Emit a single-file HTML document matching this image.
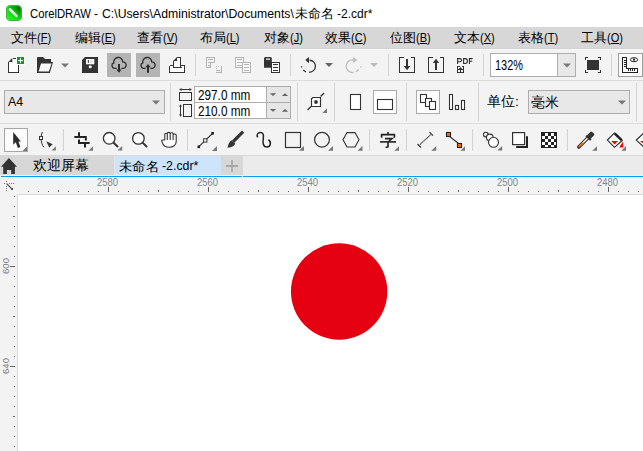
<!DOCTYPE html>
<html><head><meta charset="utf-8">
<style>
*{margin:0;padding:0;box-sizing:border-box}
html,body{width:643px;height:451px;overflow:hidden;background:#fff;font-family:"Liberation Sans",sans-serif;color:#000}
.a{position:absolute}
#ov{position:absolute;left:0;top:0;width:643px;height:451px}
.mi{position:absolute;top:29.6px;font-size:13px;line-height:16px;white-space:nowrap;color:#000}
.mi span{font-size:12px;display:inline-block;transform-origin:0 50%;transform:scaleX(0.92)}
.rl{position:absolute;top:177px;font-size:10px;line-height:12px;color:#858585;white-space:nowrap;transform-origin:0 0;transform:scaleX(0.95)}
.vl{position:absolute;left:1px;font-size:9.6px;line-height:9.6px;color:#808080;white-space:nowrap;transform-origin:0 0;transform:rotate(-90deg)}
</style></head><body>
<svg id="ov" width="643" height="451" viewBox="0 0 643 451">
<defs>
<linearGradient id="lg" x1="0" y1="1" x2="1" y2="0">
<stop offset="0" stop-color="#22ff22"/><stop offset="0.5" stop-color="#12d012"/><stop offset="1" stop-color="#004800"/>
</linearGradient>
<linearGradient id="sg" x1="0" y1="0" x2="1" y2="1">
<stop offset="0" stop-color="#ffffff"/><stop offset="1" stop-color="#c8d8c8"/>
</linearGradient>
</defs>
<!-- bands -->
<rect x="0" y="0" width="643" height="27" fill="#fff"/>
<rect x="0" y="27" width="643" height="22" fill="#d7d7d7"/>
<rect x="0" y="48" width="643" height="1" fill="#d2d2d2"/>
<rect x="0" y="49" width="643" height="1" fill="#f6f6f6"/>
<rect x="0" y="50" width="643" height="105" fill="#f3f3f3"/>
<rect x="0" y="80" width="643" height="1" fill="#dcdcdc"/>
<rect x="0" y="123" width="643" height="1" fill="#dcdcdc"/>
<rect x="0" y="155" width="643" height="1" fill="#d9d9d9"/>
<rect x="0" y="156" width="643" height="19" fill="#ebebeb"/>
<rect x="0" y="156" width="114" height="19" fill="#d7d7d7"/>
<rect x="114" y="156" width="1" height="19" fill="#e6e6e6"/>
<rect x="115" y="156" width="106" height="19" fill="#cde4fb"/>
<rect x="221" y="156" width="22" height="19" fill="#d7d7d7"/>
<rect x="0" y="175" width="643" height="1" fill="#efefef"/>
<rect x="1" y="176" width="241" height="1" fill="#00a0ee"/>
<rect x="243" y="176" width="400" height="1" fill="#00a0ee"/>
<rect x="0" y="177" width="643" height="274" fill="#f3f3f3"/>
<rect x="17" y="194" width="626" height="257" fill="#dadada"/>
<rect x="18" y="195" width="625" height="256" fill="#fff"/>

<!-- logo -->
<rect x="6" y="5" width="16" height="16" rx="4.6" fill="#3f8f3f"/>
<rect x="6.6" y="5.6" width="14.8" height="14.8" rx="3.6" fill="#28f028"/>
<rect x="7.3" y="6.3" width="13.4" height="13.4" rx="3.2" fill="url(#lg)"/>
<line x1="10" y1="9.4" x2="16.6" y2="16" stroke="url(#sg)" stroke-width="2.6" stroke-linecap="round"/>

<!-- ===== toolbar 1 ===== -->
<g fill="none" stroke="#333" stroke-width="1" shape-rendering="crispEdges">
 <!-- new doc -->
 <path d="M8,62 L12,58 L16,58 L16,64 L19,64 L19,73 L8,73 Z" fill="#fff" stroke="none"/>
</g>
<g fill="none" stroke="#333" stroke-width="1" shape-rendering="crispEdges">
 <path d="M12.5,58.5 H15.5 M8.5,62 V72.5 H18.5 V65" />
</g>
<path d="M8.3,62 L12.3,58 L12.3,62 Z" fill="#333"/>
<rect x="16" y="56" width="9" height="9" fill="#fff"/>
<rect x="17" y="57" width="7" height="7" fill="#109a2e"/>
<rect x="18" y="60" width="5" height="1" fill="#fff"/>
<rect x="20" y="58" width="1" height="5" fill="#fff"/>

<!-- open folder -->
<path d="M37,58 Q37,57 38,57 L43,57 L45,59 L51,59 L51,62 L53,62 L49.8,73 L37,73 Z" fill="#333"/>
<path d="M41,63.6 L51.6,63.6 L48.9,71.6 L38.6,71.6 Z" fill="#f7f7f7"/>
<path d="M61,63.5 L69,63.5 L65,67.5 Z" fill="#777"/>

<!-- save -->
<path d="M85,57 L98,57 L98,73 L82,73 L82,60 Z" fill="#333"/>
<rect x="86" y="59" width="8.3" height="5.3" fill="#fff"/>
<rect x="87.8" y="60" width="1.1" height="2.8" fill="#333"/>
<rect x="90" y="60" width="3" height="3" fill="#e6e6e6"/>
<circle cx="90.2" cy="66.8" r="1.5" fill="#fff"/>

<!-- cloud download -->
<rect x="107" y="53" width="24" height="24" fill="#b4b4b4"/>
<path d="M116.6,68.3 H114.3 A2.8,2.8 0 0 1 113.8,62.9 A4.5,4.5 0 1 1 122.7,61.9 A3.2,3.2 0 1 1 123.2,68.3 H121.4" fill="none" stroke="#2a2a2a" stroke-width="1.3"/>
<path d="M119,64 V70" stroke="#2a2a2a" stroke-width="2"/>
<path d="M116.3,69.6 L121.7,69.6 L119,72.8 Z" fill="#2a2a2a"/>
<!-- cloud upload -->
<rect x="136" y="53" width="24" height="24" fill="#b4b4b4"/>
<path d="M145.6,68.3 H143.3 A2.8,2.8 0 0 1 142.8,62.9 A4.5,4.5 0 1 1 151.7,61.9 A3.2,3.2 0 1 1 152.2,68.3 H150.4" fill="none" stroke="#2a2a2a" stroke-width="1.3"/>
<path d="M148,66 V72.8" stroke="#2a2a2a" stroke-width="2"/>
<path d="M145.3,67.2 L150.7,67.2 L148,64 Z" fill="#2a2a2a"/>

<!-- print -->
<path d="M173,60 L176,57 L181,57 L181,67 L173,67 Z" fill="#fff"/>
<rect x="169" y="65" width="16" height="8" fill="#fff"/>
<g fill="none" stroke="#333" stroke-width="1" shape-rendering="crispEdges">
 <path d="M176.5,57.5 H180.5 V67.5 M173.5,60.5 V67.5"/>
 <path d="M169.5,65.5 V72.5 H184.5 V65.5 H180.5 M169.5,65.5 H173.5 M172.5,67.5 H181.5"/>
</g>
<path d="M173,61 L177,57 L177,61 Z" fill="#333"/>

<!-- separators -->
<g fill="#d2d2d2">
<rect x="195" y="54" width="1" height="22"/>
<rect x="290" y="54" width="1" height="22"/>
<rect x="388" y="54" width="1" height="22"/>
<rect x="483" y="54" width="1" height="22"/>
<rect x="611" y="54" width="1" height="22"/>
</g>

<!-- disabled icon 1 -->
<g fill="none" stroke="#b4b4b4" stroke-width="1" shape-rendering="crispEdges">
 <path d="M206.5,57.5 H214.5 V62.5 H210.5 V67.5 H206.5 Z"/>
 <path d="M208,59.5 H213 M208,62.5 H210 M208,65.5 H210"/>
 <path d="M221.5,66 V72.5 H216 M216,70.5 H220"/>
 <path d="M216,66.5 H217 M218,66.5 H219 M216,68.5 H217"/>
</g>
<!-- disabled icon 2 -->
<g fill="none" stroke="#b4b4b4" stroke-width="1" shape-rendering="crispEdges">
 <rect x="235.5" y="57.5" width="8" height="10" fill="#f8f8f8"/>
 <path d="M237,59.5 H242 M237,62.5 H242 M237,65.5 H242"/>
 <rect x="242.5" y="62.5" width="8" height="10" fill="#f8f8f8"/>
 <path d="M244,64.5 H249 M244,67.5 H249 M244,70.5 H249"/>
</g>
<!-- icon 3 -->
<path d="M264,67.8 V58.5 Q264,57 265.5,57 H270.3 Q271.8,57 271.8,58.5 V67.8 Z" fill="#333"/>
<rect x="266" y="58.5" width="4" height="1.2" fill="#fff"/>
<g fill="none" stroke="#333" stroke-width="1" shape-rendering="crispEdges">
 <rect x="271.5" y="62.5" width="8" height="10" fill="#fff"/>
 <path d="M273,64.5 H278 M273,67.5 H278 M273,70.5 H278"/>
</g>

<!-- undo -->
<path d="M309.6,60.25 A6,6 0 1 1 309.2,72.25" fill="none" stroke="#333" stroke-width="1.3"/>
<path d="M303.2,69.9 L306,72" stroke="#333" stroke-width="1.3"/>
<path d="M301.3,66.3 L302,67.4" stroke="#333" stroke-width="1.3"/>
<path d="M305.3,60.1 L309,57 L309,63.2 Z" fill="#333"/>
<path d="M325,63 L333,63 L329,67 Z" fill="#666"/>
<!-- redo -->
<path d="M353.2,59.95 A6.3,6.3 0 1 0 353.6,72.4" fill="none" stroke="#bbb" stroke-width="1.3"/>
<path d="M358.8,69.5 L355.9,71.8" stroke="#bbb" stroke-width="1.3"/>
<path d="M361.2,66.2 L360.5,67.5" stroke="#bbb" stroke-width="1.3"/>
<path d="M357.2,60 L353.2,56.9 L353.2,63.1 Z" fill="#bbb"/>
<path d="M370,63 L378,63 L374,67 Z" fill="#bbb"/>

<!-- import -->
<g fill="none" stroke="#333" stroke-width="1" shape-rendering="crispEdges">
 <path d="M403.5,57.5 H399.5 V72.5 H414.5 V57.5 H410.5"/>
 <path d="M432.5,57.5 H428.5 V72.5 H443.5 V57.5 H439.5"/>
</g>
<rect x="406" y="59" width="2" height="8" fill="#333"/>
<path d="M403.8,66 L410.2,66 L407,70.2 Z" fill="#333"/>
<!-- export -->
<rect x="435" y="62" width="2" height="8" fill="#333"/>
<path d="M432.8,63 L439.2,63 L436,58.8 Z" fill="#333"/>
<!-- pdf -->
<path d="M457.6,64 V58.6 H459.8 Q461.5,58.6 461.5,60.2 Q461.5,61.8 459.8,61.8 H457.6 M463.6,58.6 V63.5 H465.2 Q467.4,63.5 467.4,61.05 Q467.4,58.6 465.2,58.6 Z M469.4,64 V58.6 H472.6 M469.4,61.2 H472.2" fill="none" stroke="#2a2a2a" stroke-width="1.05"/>
<g fill="none" stroke="#333" stroke-width="1" shape-rendering="crispEdges">
 <path d="M459.5,66.5 H457.5 V72.5 H463.5 V66.5 H461.5 M457.5,69.5 H463.5 M460.5,68 V72"/>
</g>
<path d="M458.5,69.3 L462.5,69.3 L460.5,67 Z" fill="#333"/>

<!-- zoom combo -->
<rect x="490.5" y="53.5" width="85" height="23" fill="#fff" stroke="#adadad"/>
<rect x="558" y="54" width="17" height="22" fill="#e8e8e8"/>
<rect x="557" y="54" width="1" height="22" fill="#adadad"/>
<path d="M563,63.5 L571,63.5 L567,67.5 Z" fill="#777"/>

<!-- fullscreen -->
<rect x="587" y="60" width="12" height="10" fill="#333"/>
<g fill="none" stroke="#333" stroke-width="1" shape-rendering="crispEdges">
 <path d="M585.5,60 V57.5 H588 M598,57.5 H600.5 V60 M600.5,70 V72.5 H598 M588,72.5 H585.5 V70"/>
</g>

<!-- ruler button -->
<rect x="618.5" y="53.5" width="24" height="23" fill="#fafafa" stroke="#9e9e9e"/>
<g fill="none" stroke="#222" stroke-width="1" shape-rendering="crispEdges">
 <path d="M622.5,57.5 H626.5 V68.5 H637.5 V72.5 H622.5 Z"/>
 <path d="M624,60.5 H626 M624,62.5 H626 M624,64.5 H626 M624,66.5 H626"/>
 <path d="M628.5,69 V71 M630.5,69 V71 M632.5,69 V71 M634.5,69 V71"/>
</g>
<ellipse cx="634" cy="59.7" rx="3.7" ry="2" fill="#fff" stroke="#222" stroke-width="1"/>
<circle cx="634" cy="59.7" r="1.1" fill="#222"/>

<!-- ===== property bar ===== -->
<rect x="4.5" y="90.5" width="160" height="23" fill="#e8e8e8" stroke="#adadad"/>
<path d="M152,100.5 L160,100.5 L156,104.5 Z" fill="#777"/>
<rect x="170" y="83" width="1" height="38" fill="#d2d2d2"/>

<!-- width/height icons -->
<g fill="none" stroke="#333" stroke-width="1" shape-rendering="crispEdges">
 <rect x="179.5" y="92.5" width="12" height="8"/>
 <path d="M180,89.5 H191"/>
 <rect x="183.5" y="104.5" width="8" height="12"/>
 <path d="M180.5,105 V116"/>
</g>
<path d="M179.2,89.5 L181.5,88 V91 Z M191.8,89.5 L189.5,88 V91 Z" fill="#333"/>
<path d="M180.5,104.3 L179,106.5 H182 Z M180.5,116.7 L179,114.5 H182 Z" fill="#333"/>

<!-- w/h input -->
<rect x="194.5" y="86.5" width="96" height="32" fill="#fff" stroke="#adadad"/>
<rect x="267" y="87" width="23" height="31" fill="#e6e6e6"/>
<rect x="266" y="87" width="1" height="31" fill="#adadad"/>
<rect x="195" y="102" width="95" height="1" fill="#adadad"/>
<path d="M269.8,93.3 L276.2,93.3 L273,96 Z M281.8,96 L288.2,96 L285,93.3 Z" fill="#666"/>
<path d="M269.8,109 L276.2,109 L273,111.8 Z M281.8,111.8 L288.2,111.8 L285,109 Z" fill="#666"/>
<rect x="297" y="83" width="1" height="38" fill="#d2d2d2"/>

<!-- node icon -->
<path d="M312.8,97.5 H320.5 V106.5 H311.5 V98.8 Z" fill="#fff" stroke="#333" stroke-width="1.2"/>
<circle cx="316" cy="102" r="1.9" fill="#333"/>
<path d="M308,109.5 L310.6,106.9 M321,96 L323.6,93.4" stroke="#333" stroke-width="1.4" stroke-linecap="round"/>
<path d="M322.3,113 L327,108.3 L327,113 Z" fill="#777"/>
<rect x="334" y="83" width="1" height="38" fill="#d2d2d2"/>

<!-- portrait / landscape -->
<rect x="350.5" y="94.5" width="10" height="15" fill="#fff" stroke="#333" stroke-width="1.1"/>
<rect x="373.5" y="90.5" width="23" height="23" fill="#fff" stroke="#aaa"/>
<rect x="377.5" y="99.5" width="15" height="10" fill="#fff" stroke="#333" stroke-width="1.1"/>
<rect x="406" y="83" width="1" height="38" fill="#d2d2d2"/>

<!-- all pages / current page -->
<rect x="416.5" y="90.5" width="23" height="23" fill="#fff" stroke="#aaa"/>
<g fill="#fff" stroke="#333" stroke-width="1.1">
 <rect x="420.5" y="94.5" width="6" height="8"/>
 <rect x="425.5" y="98.5" width="6" height="8"/>
 <rect x="429.5" y="101.5" width="6" height="8"/>
</g>
<g fill="#fff" stroke="#333" stroke-width="1.1">
 <rect x="449.5" y="94.5" width="3" height="15"/>
 <rect x="455.5" y="105.5" width="3" height="4"/>
 <rect x="461.5" y="100.5" width="3" height="9"/>
</g>
<rect x="478" y="83" width="1" height="38" fill="#d2d2d2"/>

<!-- units combo -->
<rect x="528.5" y="90.5" width="101" height="23" fill="#e8e8e8" stroke="#adadad"/>
<path d="M618,100.5 L626,100.5 L622,104.5 Z" fill="#777"/>
<rect x="636" y="83" width="1" height="38" fill="#d2d2d2"/>

<!-- ===== toolbox ===== -->
<rect x="4.5" y="128.5" width="23" height="23" fill="#fcfcfc" stroke="#a6a6a6"/>
<path d="M13.2,131.9 L13.2,144.8 L15.8,142.3 L17.8,147.9 L20.4,146.9 L18.5,141.6 L20.9,141.4 Z" fill="#2b2b2b"/>
<path d="M22.5,151 L27,146.5 L27,151 Z" fill="#777"/>

<!-- shape tool -->
<path d="M42.3,132 C41.6,134 41,136 41,137.9 C41,141.5 42,145 43.8,147.3" fill="none" stroke="#333" stroke-width="1"/>
<rect x="39.5" y="136.5" width="3" height="3" fill="#fff" stroke="#333" stroke-width="1"/>
<path d="M46.2,141.2 L52.6,144.3 L49.3,147.5 Z" fill="#333"/>
<path d="M51.6,150.5 L55.9,146.3 L55.9,150.5 Z" fill="#777"/>
<rect x="63" y="129" width="1" height="22" fill="#d2d2d2"/>

<!-- crop -->
<path d="M79,132.3 V137.5 M74.3,137 H85.8 V140.4 M79,139.5 V143.6 M78,143 H89.6 M85,143 V147.6" fill="none" stroke="#222" stroke-width="2" />
<path d="M88.4,150.8 L93,146.3 L93,150.8 Z" fill="#777"/>
<!-- zoom -->
<circle cx="109.2" cy="138.3" r="5.8" fill="#fff" stroke="#333" stroke-width="1.3"/>
<path d="M113.4,142.5 L118,147" stroke="#333" stroke-width="2"/>
<path d="M117.3,150.6 L122.2,146 L122.2,150.6 Z" fill="#777"/>
<circle cx="138.4" cy="138.4" r="5.8" fill="#fff" stroke="#333" stroke-width="1.3"/>
<path d="M142.6,142.6 L147,147" stroke="#333" stroke-width="2"/>
<!-- hand -->
<path d="M164.8,140 V134.3 Q164.8,133.3 166,133.3 Q167.3,133.3 167.3,134.3 V140 M167.3,134 V133.4 Q167.3,132.4 168.7,132.4 Q170.2,132.4 170.2,133.4 V140 M170.2,133.6 Q170.2,132.7 171.6,132.7 Q173.1,132.7 173.1,133.6 V140 M173.1,135 Q173.1,134 174.6,134 Q176.2,134 176.2,135 V141.5 C176.2,145 173,147.3 169.2,147.3 C165.5,147.3 163,145 162,141.8 L161.7,140.8 Q161.7,140 162.5,140 H164.8" fill="#fff" stroke="#333" stroke-width="1.1"/>
<rect x="187" y="129" width="1" height="22" fill="#d2d2d2"/>

<!-- bezier -->
<path d="M198.5,146.8 L212.5,133.5" stroke="#333" stroke-width="1.1"/>
<rect x="197.5" y="145.5" width="2.6" height="2.6" fill="#222"/>
<rect x="211.3" y="132" width="2.6" height="2.6" fill="#222"/>
<rect x="203.6" y="138.8" width="3.3" height="3.3" fill="#fff" stroke="#333" stroke-width="1"/>
<path d="M212,151 L217,146 L217,151 Z" fill="#777"/>
<!-- brush -->
<path d="M234.3,140.5 L242,132.8" stroke="#333" stroke-width="3.2" stroke-linecap="square"/>
<path d="M227.5,147.8 C228,144.5 229.3,141.7 231.5,140.2 L235.3,143.6 C234.5,146 231.5,147.5 227.5,147.8 Z" fill="#333"/>
<!-- curl -->
<path d="M257.7,137.3 C256.2,135 257.8,132.4 260.2,132.4 C263.4,132.4 263.8,135.5 263.3,138.4 C262.6,142.5 263,147 266.8,147 C270.5,147 271.8,142.5 268.5,139.6" fill="none" stroke="#222" stroke-width="1.5"/>

<!-- rect / ellipse / polygon -->
<rect x="285.5" y="132.5" width="15" height="15" fill="none" stroke="#333" stroke-width="1.2"/>
<path d="M299,150.8 L304,146 L304,150.8 Z" fill="#777"/>
<circle cx="322" cy="139.7" r="7.4" fill="none" stroke="#333" stroke-width="1.2"/>
<path d="M328,150.8 L333,146 L333,150.8 Z" fill="#777"/>
<path d="M347,132.6 L355,132.6 L359,139.8 L355,147 L347,147 L343,139.8 Z" fill="none" stroke="#333" stroke-width="1.1"/>
<path d="M357.5,150.8 L362.5,146 L362.5,150.8 Z" fill="#777"/>
<rect x="369" y="129" width="1" height="22" fill="#d2d2d2"/>

<!-- text tool 字 -->
<g fill="none" stroke="#222" stroke-width="1.6">
 <path d="M388,132 V134.5"/>
 <path d="M381.6,137.8 V134.6 H394.4 V137.8"/>
 <path d="M385,138.6 H392 L388.6,141.5"/>
 <path d="M380,141.9 H396"/>
 <path d="M388,141.5 V146.5 Q388,147.3 387,147.3 H385.6"/>
</g>
<path d="M394.3,150.8 L399,146.3 L399,150.8 Z" fill="#777"/>
<rect x="406" y="129" width="1" height="22" fill="#d2d2d2"/>

<!-- dimension -->
<path d="M420,144.5 L431,134.5" stroke="#333" stroke-width="1.1" stroke-dasharray="1.2 0.4"/>
<path d="M429.5,132.2 L433,135.7 M417.5,144 L421,147.5" stroke="#333" stroke-width="1.2"/>
<path d="M431.3,150.8 L436.2,146 L436.2,150.8 Z" fill="#777"/>
<!-- connector -->
<path d="M449,136 L458.5,143.5" stroke="#333" stroke-width="1.1"/>
<rect x="446.5" y="132.5" width="4" height="4" fill="#ff6a00" stroke="#222" stroke-width="1.1"/>
<rect x="457.5" y="143.5" width="4" height="4" fill="#ff6a00" stroke="#222" stroke-width="1.1"/>
<path d="M460.4,150.8 L465,146.3 L465,150.8 Z" fill="#777"/>
<rect x="472" y="129" width="1" height="22" fill="#d2d2d2"/>

<!-- blend -->
<g fill="#fff" stroke="#333" stroke-width="1.1">
 <circle cx="485.8" cy="134.6" r="2.3"/>
 <circle cx="489.8" cy="137.4" r="3.3"/>
 <circle cx="493.5" cy="142.3" r="5"/>
</g>
<path d="M497.3,150.6 L502.2,146 L502.2,150.6 Z" fill="#777"/>
<!-- shadow -->
<rect x="512.6" y="132.6" width="12" height="12" fill="#fff" stroke="#333" stroke-width="1.2"/>
<path d="M527,136.2 V147 H516.2" fill="none" stroke="#222" stroke-width="2"/>
<!-- checker -->
<rect x="541" y="132" width="16" height="16" fill="#222"/>
<g fill="#fff">
 <rect x="545" y="133" width="3" height="3"/><rect x="551" y="133" width="3" height="3"/>
 <rect x="542" y="136" width="3" height="3"/><rect x="548" y="136" width="3" height="3"/><rect x="554" y="136" width="2" height="3"/>
 <rect x="545" y="139" width="3" height="3"/><rect x="551" y="139" width="3" height="3"/>
 <rect x="542" y="142" width="3" height="3"/><rect x="548" y="142" width="3" height="3"/><rect x="554" y="142" width="2" height="3"/>
 <rect x="545" y="145" width="3" height="2"/><rect x="551" y="145" width="3" height="2"/>
</g>
<rect x="567" y="129" width="1" height="22" fill="#d2d2d2"/>

<!-- eyedropper -->
<path d="M578.8,147 L588.5,137.3" stroke="#333" stroke-width="3.6" stroke-linecap="round"/>
<path d="M580.2,145.6 L588,137.8" stroke="#fff" stroke-width="1.4"/>
<path d="M579.2,146.6 L582.6,143.2" stroke="#ee6a10" stroke-width="1.8" stroke-linecap="round"/>
<path d="M586.3,135.5 L590.8,140" stroke="#333" stroke-width="2.4"/>
<rect x="588.3" y="131.8" width="5" height="6.5" rx="1.3" transform="rotate(45 590.8 135)" fill="#333"/>
<path d="M592.2,150.8 L597,146.3 L597,150.8 Z" fill="#777"/>
<!-- fill -->
<path d="M614.5,132.9 L622.3,140.4 L614.5,147.3 L607.4,140.1 Z" fill="#fff" stroke="#222" stroke-width="1.1"/>
<path d="M614.8,133.6 L621.6,140.1" stroke="#222" stroke-width="2.6"/>
<path d="M611.2,141 L618,141 L614.6,144.4 Z" fill="#ff0000"/>
<path d="M619.2,147.6 L623,141.5 L623.3,147.6 Z" fill="#ff0000"/>
<path d="M621.4,150.7 L626,146.1 L626,150.7 Z" fill="#777"/>
<path d="M644,132.9 L636.3,140.1 L644,147.3" fill="#fff" stroke="#222" stroke-width="1.1"/>
<path d="M640,141 L643,141 L643,143.5 Z" fill="#ff0000"/>

<!-- ===== tabs ===== -->
<path d="M8.9,158 L17,166.8 L14.9,166.8 L14.9,174 L11.2,174 L11.2,170 L6.9,170 L6.9,174 L3.2,174 L3.2,166.8 L1,166.8 Z" fill="#333"/>
<path d="M226,166 H238 M232,160 V172" stroke="#a8a8a8" stroke-width="1.8"/>

<!-- rulers -->
<g fill="#666" id="ticks"><rect x="28" y="191" width="1" height="1"/><rect x="38" y="191" width="1" height="1"/><rect x="48" y="191" width="1" height="1"/><rect x="58" y="190" width="1" height="2"/><rect x="68" y="191" width="1" height="1"/><rect x="78" y="191" width="1" height="1"/><rect x="88" y="191" width="1" height="1"/><rect x="98" y="191" width="1" height="1"/><rect x="108" y="187" width="1" height="5"/><rect x="118" y="191" width="1" height="1"/><rect x="128" y="191" width="1" height="1"/><rect x="138" y="191" width="1" height="1"/><rect x="148" y="191" width="1" height="1"/><rect x="158" y="190" width="1" height="2"/><rect x="168" y="191" width="1" height="1"/><rect x="178" y="191" width="1" height="1"/><rect x="188" y="191" width="1" height="1"/><rect x="198" y="191" width="1" height="1"/><rect x="208" y="187" width="1" height="5"/><rect x="218" y="191" width="1" height="1"/><rect x="228" y="191" width="1" height="1"/><rect x="238" y="191" width="1" height="1"/><rect x="248" y="191" width="1" height="1"/><rect x="258" y="190" width="1" height="2"/><rect x="268" y="191" width="1" height="1"/><rect x="278" y="191" width="1" height="1"/><rect x="288" y="191" width="1" height="1"/><rect x="298" y="191" width="1" height="1"/><rect x="308" y="187" width="1" height="5"/><rect x="318" y="191" width="1" height="1"/><rect x="328" y="191" width="1" height="1"/><rect x="338" y="191" width="1" height="1"/><rect x="348" y="191" width="1" height="1"/><rect x="358" y="190" width="1" height="2"/><rect x="368" y="191" width="1" height="1"/><rect x="378" y="191" width="1" height="1"/><rect x="388" y="191" width="1" height="1"/><rect x="398" y="191" width="1" height="1"/><rect x="408" y="187" width="1" height="5"/><rect x="418" y="191" width="1" height="1"/><rect x="428" y="191" width="1" height="1"/><rect x="438" y="191" width="1" height="1"/><rect x="448" y="191" width="1" height="1"/><rect x="458" y="190" width="1" height="2"/><rect x="468" y="191" width="1" height="1"/><rect x="478" y="191" width="1" height="1"/><rect x="488" y="191" width="1" height="1"/><rect x="498" y="191" width="1" height="1"/><rect x="508" y="187" width="1" height="5"/><rect x="518" y="191" width="1" height="1"/><rect x="528" y="191" width="1" height="1"/><rect x="538" y="191" width="1" height="1"/><rect x="548" y="191" width="1" height="1"/><rect x="558" y="190" width="1" height="2"/><rect x="568" y="191" width="1" height="1"/><rect x="578" y="191" width="1" height="1"/><rect x="588" y="191" width="1" height="1"/><rect x="598" y="191" width="1" height="1"/><rect x="608" y="187" width="1" height="5"/><rect x="618" y="191" width="1" height="1"/><rect x="628" y="191" width="1" height="1"/><rect x="638" y="191" width="1" height="1"/><rect x="14" y="196" width="1" height="1"/><rect x="14" y="206" width="1" height="1"/><rect x="13" y="216" width="2" height="1"/><rect x="14" y="226" width="1" height="1"/><rect x="14" y="236" width="1" height="1"/><rect x="14" y="246" width="1" height="1"/><rect x="14" y="256" width="1" height="1"/><rect x="10" y="266" width="5" height="1"/><rect x="14" y="276" width="1" height="1"/><rect x="14" y="286" width="1" height="1"/><rect x="14" y="296" width="1" height="1"/><rect x="14" y="306" width="1" height="1"/><rect x="13" y="316" width="2" height="1"/><rect x="14" y="326" width="1" height="1"/><rect x="14" y="336" width="1" height="1"/><rect x="14" y="346" width="1" height="1"/><rect x="14" y="356" width="1" height="1"/><rect x="10" y="366" width="5" height="1"/><rect x="14" y="376" width="1" height="1"/><rect x="14" y="386" width="1" height="1"/><rect x="14" y="396" width="1" height="1"/><rect x="14" y="406" width="1" height="1"/><rect x="13" y="416" width="2" height="1"/><rect x="14" y="426" width="1" height="1"/><rect x="14" y="436" width="1" height="1"/><rect x="14" y="446" width="1" height="1"/></g>

<!-- corner icon -->
<g fill="#777">
 <rect x="6" y="181" width="1" height="1"/><rect x="6" y="186" width="1" height="1"/><rect x="6" y="188" width="1" height="1"/><rect x="6" y="190" width="1" height="1"/>
 <rect x="4" y="183" width="1" height="1"/><rect x="9" y="183" width="1" height="1"/><rect x="11" y="183" width="1" height="1"/><rect x="13" y="183" width="1" height="1"/>
</g>
<path d="M6.5,183.5 L12,189" stroke="#555" stroke-width="1.1"/>
<rect x="11" y="188" width="2" height="2" fill="#555"/>

<!-- circle -->
<circle cx="339.15" cy="291.45" r="48.2" fill="#e50012"/>
</svg>

<!-- title -->
<div class="a" id="ttext" style="left:0;top:6px;width:643px;height:16px;font-size:12px;line-height:16px;white-space:nowrap;color:#000">
<span class="a" id="t1" style="left:30px;top:0;transform-origin:0 0;transform:scaleX(0.94)">CorelDRAW</span>
<span class="a" id="t2" style="left:94px;top:0">-</span>
<span class="a" id="t3" style="left:102px;top:0;transform-origin:0 0;transform:scaleX(1.02)">C:\Users\Administrator\Documents\</span>
<span class="a" id="t4" style="left:295px;top:0;font-size:12.5px">未命名</span>
<span class="a" id="t5" style="left:337px;top:0">-2.cdr*</span>
</div>

<!-- menu -->
<div class="mi" style="left:11px">文件<span>(<u>F</u>)</span></div>
<div class="mi" style="left:75px">编辑<span>(<u>E</u>)</span></div>
<div class="mi" style="left:137px">查看<span>(<u>V</u>)</span></div>
<div class="mi" style="left:200px">布局<span>(<u>L</u>)</span></div>
<div class="mi" style="left:264px">对象<span>(<u>J</u>)</span></div>
<div class="mi" style="left:325px">效果<span>(<u>C</u>)</span></div>
<div class="mi" style="left:390px">位图<span>(<u>B</u>)</span></div>
<div class="mi" style="left:454px">文本<span>(<u>X</u>)</span></div>
<div class="mi" style="left:518px">表格<span>(<u>T</u>)</span></div>
<div class="mi" style="left:581px">工具<span>(<u>O</u>)</span></div>

<!-- toolbar texts -->
<div class="a" style="left:495px;top:56.5px;font-size:14px;line-height:16px;transform-origin:0 0;transform:scaleX(0.78)">132%</div>
<div class="a" style="left:8px;top:94px;font-size:13px;line-height:16px;transform-origin:0 0;transform:scaleX(0.95)">A4</div>
<div class="a" style="left:198px;top:87px;font-size:14px;line-height:16px;transform-origin:0 0;transform:scaleX(0.84)">297.0 mm</div>
<div class="a" style="left:198px;top:103px;font-size:14px;line-height:16px;transform-origin:0 0;transform:scaleX(0.84)">210.0 mm</div>
<div class="a" style="left:487px;top:94px;font-size:13.5px;line-height:16px">单位:</div>
<div class="a" style="left:531px;top:94px;font-size:14px;line-height:16px">毫米</div>

<!-- tabs text -->
<div class="a" style="left:33px;top:158px;font-size:13.5px;line-height:16px">欢迎屏幕</div>
<div class="a" style="left:118.5px;top:158.5px;font-size:13px;line-height:16px;transform-origin:0 0;transform:scaleX(1.03)">未命名</div>
<div class="a" style="left:161.5px;top:158px;font-size:13px;line-height:16px;transform-origin:0 0;transform:scaleX(0.95)">-2.cdr*</div>

<!-- ruler labels -->
<div class="rl" style="left:97px">2580</div>
<div class="rl" style="left:197px">2560</div>
<div class="rl" style="left:297px">2540</div>
<div class="rl" style="left:397px">2520</div>
<div class="rl" style="left:497px">2500</div>
<div class="rl" style="left:597px">2480</div>
<div class="vl" style="top:274px">600</div>
<div class="vl" style="top:374px">640</div>
</body></html>
